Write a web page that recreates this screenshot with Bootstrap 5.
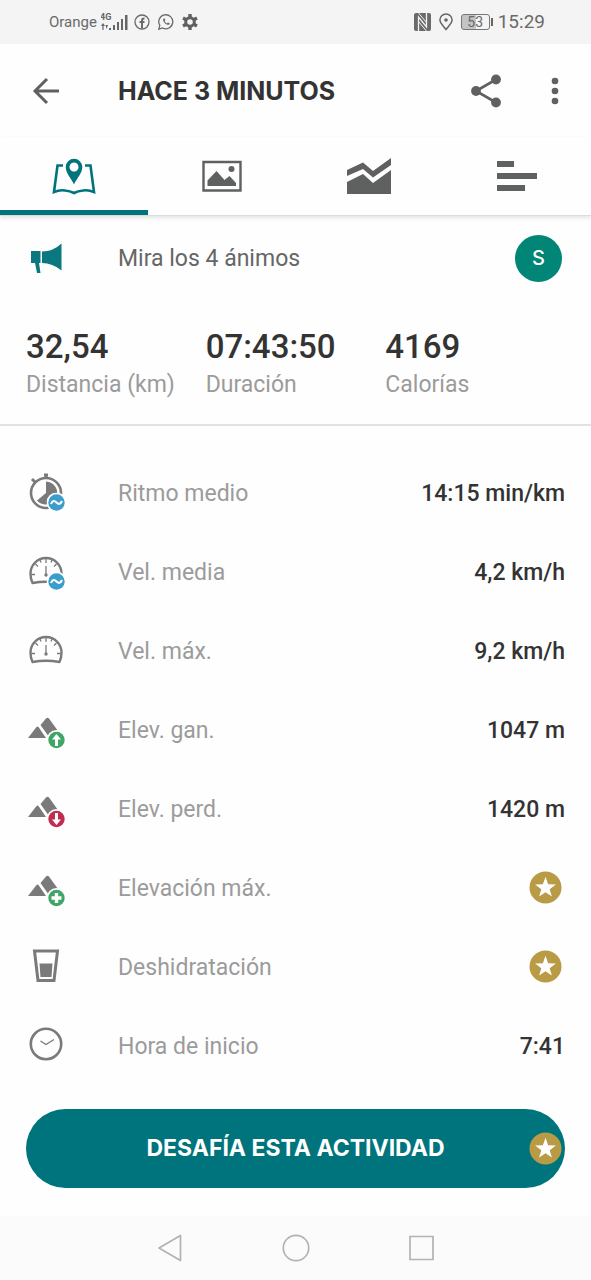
<!DOCTYPE html>
<html lang="es">
<head>
<meta charset="utf-8">
<meta name="viewport" content="width=device-width, initial-scale=1">
<title>Actividad</title>
<link href="https://cdn.jsdelivr.net/npm/bootstrap@5.3.0/dist/css/bootstrap.min.css" rel="stylesheet">
<style>
  :root { --teal: #00747c; --ink: #333; --mid: #5f6060; --soft: #9b9b9b; }
  body { font-family: Roboto, "Noto Sans", sans-serif; color: var(--ink); background: #fefefe; font-size: 23px; line-height: 28px; }
  svg { display: block; flex: none; }
  button { color: inherit; }
  .status-bar { height: 44px; background: #f4f4f4; color: #6a6a6a; padding: 0 46px 0 49px; line-height: 20px; }
  .carrier { font-size: 15px; }
  .clock { font-size: 19px; }
  .battery { width: 29px; height: 16px; border: 1px solid #777; border-radius: 3px; font-size: 14px; line-height: 14px; background: linear-gradient(90deg, #c4c4c4 50%, #f4f4f4 50%); position: relative; }
  .battery::after { content: ""; position: absolute; right: -4px; top: 3px; width: 2px; height: 8px; background: #666; }
  .app-bar { height: 93px; padding: 0 26px; color: var(--mid); }
  .app-actions { gap: 43px; }
  .brand-font { font-family: Inter, "Liberation Sans", sans-serif; font-weight: 700; }
  .app-title { font-size: 25px; line-height: 28px; color: var(--ink); }
  .lead-col { width: 92px; flex: none; }
  .icon-btn { background: none; border: 0; padding: 0; }
  .tab-strip { height: 79px; border-bottom: 1px solid #dcdcdc; box-shadow: 0 2px 4px rgba(0,0,0,.1); color: var(--mid); }
  .tab-strip button { height: 78px; border: 0; border-bottom: 5px solid transparent; background: none; padding: 4px 0 0; }
  .tab-strip button.active { color: var(--teal); border-bottom-color: var(--teal); }
  .cheers { height: 84px; padding: 0 29px 0 26px; color: #666; text-decoration: none; }
  .avatar { width: 47px; height: 47px; background: #008577; color: #fff; font-size: 20px; font-weight: 500; }
  .row-text { padding-top: 2px; }
  .stats { padding: 27px 26px 21px; border-bottom: 2px solid #e2e2e2; }
  .stat-value { font-size: 33px; line-height: 40px; font-weight: 500; }
  .stat-label { line-height: 36px; color: var(--soft); white-space: nowrap; }
  .details { padding: 27px 26px 0; }
  .detail-row { height: 79px; }
  .detail-row dt { color: var(--soft); font-weight: 400; }
  .detail-row dd { font-weight: 500; }
  .detail-icon { color: #7a7a7a; }
  .star-cell { margin-right: 3px; }
  .cta-wrap { padding: 24px 26px 28px; }
  .cta { height: 79px; background: var(--teal); color: #fff; font-size: 23px; border: 0; }
  .cta:hover, .cta:active { background: #00656c !important; color: #fff !important; }
  .cta-star { right: 3px; top: 23px; }
  .nav-keys { height: 64px; background: #fbfbfb; color: #b2b2b2; gap: 98px; }
</style>
</head>
<body>
<svg width="0" height="0" class="position-absolute" aria-hidden="true">
  <symbol id="star" viewBox="0 0 34 34"><circle cx="17" cy="17" r="16.500" fill="#b99b45"/><path fill="#fff" d="M17 6l2.700 7.600 8 .2-6.400 4.900 2.300 7.700-6.600-4.600-6.600 4.600 2.300-7.700-6.400-4.900 8-.2z"/></symbol>
  <symbol id="peaks" viewBox="0 0 40 40"><path fill="currentColor" d="M2 28L10.500 17q1-1 2 0L20 28zM14.500 15l5.500-6.500q1.500-1.500 3 0L32 21l-9 6z"/><circle cx="30.500" cy="30" r="10" fill="#fefefe"/></symbol>
  <symbol id="gauge" viewBox="0 0 40 40"><path d="M6.500 31Q4.500 27 4.500 21.500a15.500 15.500 0 0 1 31 0Q35.500 27 33.500 31 20 28.500 6.500 31z" fill="none" stroke="currentColor" stroke-width="2.400" stroke-linejoin="round"/><path d="M20 7v4M5.500 22.500H9M31 22.500h3.500M9.500 12l2.500 2.500M30.500 12L28 14.500M14 8l1 2.500M26 8l-1 2.500M20 14v9" stroke="currentColor" stroke-width="1.300"/><circle cx="20" cy="23" r="1.700" fill="currentColor"/></symbol>
  <symbol id="wave" viewBox="0 0 20 20"><circle cx="10" cy="10" r="10" fill="#fefefe"/><circle cx="10" cy="10" r="8.200" fill="#3b9dcb"/><path d="M4.500 11.500c1.500-4 3.500-3.500 5.500-1.500s4 2 5.500-1.500" fill="none" stroke="#fff" stroke-width="2.100"/></symbol>
</svg>

<header>
  <div class="status-bar d-flex align-items-center">
    <span class="carrier">Orange</span>
    <svg class="ms-1" width="29" height="22" viewBox="0 0 29 22" fill="#666" role="img" aria-label="Señal 4G"><text x="-1" y="9" font-size="9" font-weight="700" font-family="Roboto">4G</text><path d="M8 17h2v2H8zM12 14h2v5h-2zM16 11h2v8h-2zM20 8h2v11h-2zM24 4h2.500v15H24zM0 15l2-3 2 3H2.600v4H1.400v-4zM4.500 14l1 4L7 14z"/></svg>
    <svg class="ms-1" width="16" height="16" viewBox="0 0 16 16" role="img" aria-label="Facebook"><circle cx="8" cy="8" r="7" fill="none" stroke="#6a6a6a" stroke-width="1.300"/><path d="M8 14V6.500Q8 4.300 10.500 4.400M5.500 8h5" fill="none" stroke="#6a6a6a" stroke-width="2"/></svg>
    <svg class="ms-2" width="16" height="16" viewBox="0 0 16 16" fill="none" stroke="#6a6a6a" role="img" aria-label="WhatsApp"><path d="M.8 15.200l1-3.800A7 7 0 1 1 4.600 14z" stroke-width="1.300"/><path d="M5.200 4.800c-.7 3 2.800 6.500 6 6l.5-1.500-1.800-.8-1 1C7.800 9 7 8 6.600 7.100l.8-1-.7-1.700z" fill="#6a6a6a" stroke="none"/></svg>
    <svg class="ms-2" width="16" height="16" viewBox="0 0 16 16" fill="none" stroke="#606060" role="img" aria-label="Ajustes"><circle cx="8" cy="8" r="4.300" stroke-width="3"/><path d="M8 0v3M8 13v3M1 4l2.800 1.500M12.200 10.500L15 12M1 12l2.800-1.500M12.200 5.500L15 4" stroke-width="3.400"/></svg>
    <svg class="ms-auto" width="17" height="18" viewBox="0 0 17 18" role="img" aria-label="NFC"><rect x="0" y="0" width="17" height="18" rx="2" fill="#6a6a6a"/><path d="M4.500 18V4l8 10V0" fill="none" stroke="#f4f4f4" stroke-width="1.300"/><path d="M4.500 0l8 9.500M4.500 8.500l8 9.500" fill="none" stroke="#f4f4f4" stroke-width="1"/></svg>
    <svg class="ms-2" width="14" height="18" viewBox="0 0 14 18" role="img" aria-label="Ubicación"><path d="M7 16.500C4 12.500.9 10 .9 7a6.100 6.100 0 0 1 12.200 0c0 3-3.100 5.500-6.100 9.500z" fill="none" stroke="#666" stroke-width="1.500"/><circle cx="7" cy="7" r="1.800" fill="#666"/></svg>
    <span class="battery ms-2 text-center">53</span>
    <time class="clock ms-2">15:29</time>
  </div>

  <div class="app-bar d-flex align-items-center">
    <div class="lead-col d-flex"><button class="icon-btn" aria-label="Atrás"><svg width="40" height="32" viewBox="0 0 40 32" fill="none" stroke="currentColor" stroke-width="3"><path d="M33 16H9M21 4L9 16l12 12"/></svg></button></div>
    <h1 class="app-title brand-font m-0">HACE 3 MINUTOS</h1>
    <div class="app-actions d-flex align-items-center ms-auto">
      <button class="icon-btn" aria-label="Compartir"><svg width="32" height="34" viewBox="0 0 32 34" fill="currentColor"><path d="M26 5.500L6 17l20 11.500" fill="none" stroke="currentColor" stroke-width="2.600"/><circle cx="26" cy="5.500" r="4.900"/><circle cx="6" cy="17" r="4.900"/><circle cx="26" cy="28.500" r="4.900"/></svg></button>
      <button class="icon-btn" aria-label="Más opciones"><svg width="20" height="28" viewBox="0 0 20 28" fill="currentColor"><circle cx="10" cy="4" r="3.300"/><circle cx="10" cy="14" r="3.300"/><circle cx="10" cy="24" r="3.300"/></svg></button>
    </div>
  </div>

  <nav class="tab-strip row g-0" role="tablist" aria-label="Vistas">
    <button class="col d-flex align-items-center justify-content-center active" role="tab" aria-selected="true" aria-label="Mapa"><svg width="44" height="38" viewBox="0 0 44 38"><path d="M11 8.500H5.500L2 35q6-2.500 11-1.500 5 .5 9 2.500 4-2 9-2.500 5-1 11 1.500L38.500 8.500H33" fill="none" stroke="currentColor" stroke-width="2.600"/><path fill="currentColor" fill-rule="evenodd" d="M22 27.500c-2.500-6-8.300-11-8.300-17.500a8.300 8.300 0 0 1 16.600 0c0 6.500-5.800 11.500-8.300 17.500zM22 5.500a4.500 4.500 0 1 0 .01 0z"/></svg></button>
    <button class="col d-flex align-items-center justify-content-center" role="tab" aria-selected="false" aria-label="Fotos"><svg width="40" height="32" viewBox="0 0 40 32" fill="currentColor"><path d="M1.500 2h37v28.500h-37z" fill="none" stroke="currentColor" stroke-width="2.400"/><path d="M5.500 26v-5.500L14.500 11l8 9 5-4 6.500 7v3z"/><circle cx="29.500" cy="9" r="3"/></svg></button>
    <button class="col d-flex align-items-center justify-content-center" role="tab" aria-selected="false" aria-label="Gráficos"><svg width="44" height="38" viewBox="0 0 44 38" fill="currentColor"><path d="M0 13L16 5.500 26 14 44 1v7L26 20.500 16 12 0 19zM0 25l16-8 10 9 18-13v24H0z"/></svg></button>
    <button class="col d-flex align-items-center justify-content-center" role="tab" aria-selected="false" aria-label="Vueltas"><svg width="40" height="32" viewBox="0 0 40 32" fill="currentColor"><path d="M0 1h17v6H0zM0 13h40v6H0zM0 25h28v6H0z"/></svg></button>
  </nav>
</header>

<main>
  <a href="#" class="cheers d-flex align-items-center">
    <span class="lead-col"><svg width="38" height="32" viewBox="0 0 38 32" fill="#0b7880" aria-hidden="true"><path d="M5 9h9.500v12H5zM16 9.500q11 0 19.500-8v27q-9-7.500-19.500-7.500zM9 21h4l1.500 10H11z"/></svg></span>
    <span class="row-text">Mira los 4 ánimos</span>
    <span class="avatar brand-font rounded-circle d-flex align-items-center justify-content-center ms-auto">S</span>
  </a>

  <section class="stats row g-0" aria-label="Resumen">
    <div class="col-4"><div class="stat-value">32,54</div><div class="stat-label">Distancia (km)</div></div>
    <div class="col-4"><div class="stat-value">07:43:50</div><div class="stat-label">Duración</div></div>
    <div class="col-4"><div class="stat-value">4169</div><div class="stat-label">Calorías</div></div>
  </section>

  <dl class="details m-0">
    <div class="detail-row d-flex align-items-center">
      <span class="detail-icon lead-col"><svg width="40" height="40" viewBox="0 0 40 40"><circle cx="20" cy="20" r="15" fill="none" stroke="currentColor" stroke-width="2.600"/><path d="M20 1v5M6 6l4 4M18 2h4" stroke="currentColor" stroke-width="3"/><path fill="currentColor" d="M20 20V8.500A11.500 11.500 0 1 1 11 27.500z"/><use href="#wave" x="20.500" y="19.500" width="20" height="20"/></svg></span>
      <dt class="row-text">Ritmo medio</dt><dd class="row-text ms-auto mb-0">14:15 min/km</dd>
    </div>
    <div class="detail-row d-flex align-items-center">
      <span class="detail-icon lead-col"><svg width="40" height="40" viewBox="0 0 40 40"><use href="#gauge"/><use href="#wave" x="20.500" y="19.500" width="20" height="20"/></svg></span>
      <dt class="row-text">Vel. media</dt><dd class="row-text ms-auto mb-0">4,2 km/h</dd>
    </div>
    <div class="detail-row d-flex align-items-center">
      <span class="detail-icon lead-col"><svg width="40" height="40" viewBox="0 0 40 40"><use href="#gauge"/></svg></span>
      <dt class="row-text">Vel. máx.</dt><dd class="row-text ms-auto mb-0">9,2 km/h</dd>
    </div>
    <div class="detail-row d-flex align-items-center">
      <span class="detail-icon lead-col"><svg width="40" height="40" viewBox="0 0 40 40"><use href="#peaks"/><circle cx="30.500" cy="30" r="8.200" fill="#3fa668"/><path fill="#fff" d="M30.500 24l4.500 5.500h-3V36h-3v-6.500h-3z"/></svg></span>
      <dt class="row-text">Elev. gan.</dt><dd class="row-text ms-auto mb-0">1047 m</dd>
    </div>
    <div class="detail-row d-flex align-items-center">
      <span class="detail-icon lead-col"><svg width="40" height="40" viewBox="0 0 40 40"><use href="#peaks"/><circle cx="30.500" cy="30" r="8.200" fill="#c02d50"/><path fill="#fff" d="M30.500 36l4.500-5.500h-3V24h-3v6.500h-3z"/></svg></span>
      <dt class="row-text">Elev. perd.</dt><dd class="row-text ms-auto mb-0">1420 m</dd>
    </div>
    <div class="detail-row d-flex align-items-center">
      <span class="detail-icon lead-col"><svg width="40" height="40" viewBox="0 0 40 40"><use href="#peaks"/><circle cx="30.500" cy="30" r="8.200" fill="#3fa668"/><path stroke="#fff" stroke-width="3.400" d="M30.500 25v10M25.500 30h10"/></svg></span>
      <dt class="row-text">Elevación máx.</dt><dd class="star-cell ms-auto mb-0"><svg width="33" height="33" role="img" aria-label="Premium"><use href="#star"/></svg></dd>
    </div>
    <div class="detail-row d-flex align-items-center">
      <span class="detail-icon lead-col"><svg width="40" height="40" viewBox="0 0 40 40"><path d="M8.500 4h23L28 33.500H12z" fill="none" stroke="currentColor" stroke-width="3"/><path fill="currentColor" d="M13.500 16.500h13L25.500 30h-11z"/></svg></span>
      <dt class="row-text">Deshidratación</dt><dd class="star-cell ms-auto mb-0"><svg width="33" height="33" role="img" aria-label="Premium"><use href="#star"/></svg></dd>
    </div>
    <div class="detail-row d-flex align-items-center">
      <span class="detail-icon lead-col"><svg width="40" height="40" viewBox="0 0 40 40" fill="none" stroke="currentColor"><circle cx="20" cy="18" r="15.200" stroke-width="2.600"/><path d="M14.500 15l5.500 3.500 8-5" stroke-width="1.400"/></svg></span>
      <dt class="row-text">Hora de inicio</dt><dd class="row-text ms-auto mb-0">7:41</dd>
    </div>
  </dl>

  <div class="cta-wrap">
    <button class="cta brand-font btn rounded-pill w-100 position-relative">DESAFÍA ESTA ACTIVIDAD<svg class="cta-star position-absolute" width="33" height="33" aria-hidden="true"><use href="#star"/></svg></button>
  </div>
</main>

<footer class="nav-keys d-flex align-items-center justify-content-center">
  <button class="icon-btn" aria-label="Retroceder"><svg width="28" height="28" viewBox="0 0 28 28" fill="none" stroke="currentColor" stroke-width="1.700" stroke-linejoin="round"><path d="M24.500 1.500v25L3 14z"/></svg></button>
  <button class="icon-btn" aria-label="Inicio"><svg width="28" height="28" viewBox="0 0 28 28" fill="none" stroke="currentColor" stroke-width="1.700"><circle cx="14" cy="14" r="12.700"/></svg></button>
  <button class="icon-btn" aria-label="Recientes"><svg width="28" height="28" viewBox="0 0 28 28" fill="none" stroke="currentColor" stroke-width="1.700"><path d="M2 2.500h23v23H2z"/></svg></button>
</footer>
<script src="https://cdn.jsdelivr.net/npm/bootstrap@5.3.0/dist/js/bootstrap.bundle.min.js"></script>
</body>
</html>
